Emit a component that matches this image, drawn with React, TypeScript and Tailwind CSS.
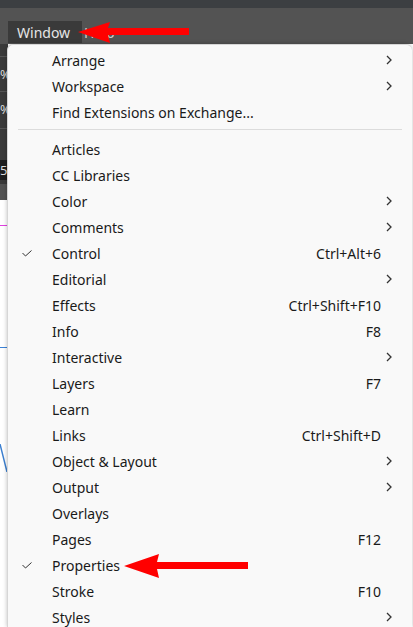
import React from "react";

type Item = { label: string; shortcut?: string; sub?: boolean; check?: boolean };

const top: Item[] = [
  { label: "Arrange", sub: true },
  { label: "Workspace", sub: true },
  { label: "Find Extensions on Exchange..." },
];

const rest: Item[] = [
  { label: "Articles" },
  { label: "CC Libraries" },
  { label: "Color", sub: true },
  { label: "Comments", sub: true },
  { label: "Control", shortcut: "Ctrl+Alt+6", check: true },
  { label: "Editorial", sub: true },
  { label: "Effects", shortcut: "Ctrl+Shift+F10" },
  { label: "Info", shortcut: "F8" },
  { label: "Interactive", sub: true },
  { label: "Layers", shortcut: "F7" },
  { label: "Learn" },
  { label: "Links", shortcut: "Ctrl+Shift+D" },
  { label: "Object & Layout", sub: true },
  { label: "Output", sub: true },
  { label: "Overlays" },
  { label: "Pages", shortcut: "F12" },
  { label: "Properties", check: true },
  { label: "Stroke", shortcut: "F10" },
  { label: "Styles", sub: true },
];

function Row({ it }: { it: Item }) {
  return (
    <div className="flex h-[26px] items-center">
      <div className="w-[44px] shrink-0 pl-[14px]">
        {it.check && (
          <svg width="10" height="7" viewBox="0 0 10 7">
            <path d="M0.5 3 L3.5 6 L9.5 0.5" fill="none" stroke="#333" strokeWidth="1" />
          </svg>
        )}
      </div>
      <span className="flex-1">{it.label}</span>
      {it.shortcut && <span className="mr-[31px]">{it.shortcut}</span>}
      {it.sub && (
        <svg width="6" height="10" viewBox="0 0 6 10" className="mr-[20px]">
          <path d="M1 1 L5 5 L1 9" fill="none" stroke="#333" strokeWidth="1.3" />
        </svg>
      )}
    </div>
  );
}

export default function App() {
  return (
    <div
      className="relative flex h-[627px] w-[413px] flex-col overflow-hidden bg-white"
      style={{ fontFamily: '"Noto Sans", "Open Sans", sans-serif' }}
    >
      {/* app top strip */}
      <div className="h-[8px] shrink-0 bg-[#3c3f42]" />
      <div className="flex h-[36px] shrink-0 items-end gap-[2px] bg-[#535353] pb-[1px] pl-[8px] text-[14px]">
        <div className="flex h-[22px] w-[74px] items-center bg-[#3a3a3a] pl-[9px] text-[#e6e6e6]">Window</div>
        <div className="flex h-[22px] items-center text-[#cfcfcf]">Help</div>
      </div>
      {/* left canvas strip */}
      <div className="flex w-[8px] flex-col text-[13px] leading-none text-[#ddd]">
        <div className="flex h-[140px] flex-col bg-[#3a3a3a]">
          <div className="mt-[12px] h-px bg-[#555]" />
          <div className="mt-[11px]">%</div>
          <div className="mt-[10px] h-px bg-[#555]" />
          <div className="mt-[11px]">%</div>
          <div className="mt-[12px] h-px bg-[#555]" />
          <div className="mt-[31px] h-[20px] bg-[#1e1e1e] leading-[20px]">5</div>
        </div>
        <div className="h-[16px] bg-[#535353]" />
        <div className="mt-[25px] h-px bg-[#e040e0]" />
        <div className="mt-[121px] h-px bg-[#3b82d6]" />
        <svg className="mt-[96px]" width="8" height="28" viewBox="0 0 8 28">
          <path d="M0 0 L7 28" stroke="#3b7fd0" strokeWidth="1.5" />
        </svg>
      </div>

      {/* menu */}
      <div className="absolute left-[7px] top-[44px] bottom-0 right-[1px] rounded-tl-[6px] rounded-tr-[6px] border-l border-t border-[#d6d6d6] bg-[#f9f9f9] pt-[2px] text-[14px] text-[#1a1a1a] shadow-[0_0_4px_rgba(0,0,0,0.25)]">
        {top.map((it) => (
          <Row key={it.label} it={it} />
        ))}
        <div className="mx-[10px] mt-[4px] mb-[6px] h-px bg-[#dcdcdc]" />
        {rest.map((it) => (
          <Row key={it.label} it={it} />
        ))}
      </div>

      {/* red arrows */}
      <svg className="absolute left-0 top-0" width="413" height="627" viewBox="0 0 413 627">
        <polygon points="78,32 110,22 108,28 189,28 189,35 108,35 110,43" fill="#ff0000" />
        <polygon points="124,566 159,554 157,562 248,562 248,569 157,569 159,578" fill="#ff0000" />
      </svg>
    </div>
  );
}
